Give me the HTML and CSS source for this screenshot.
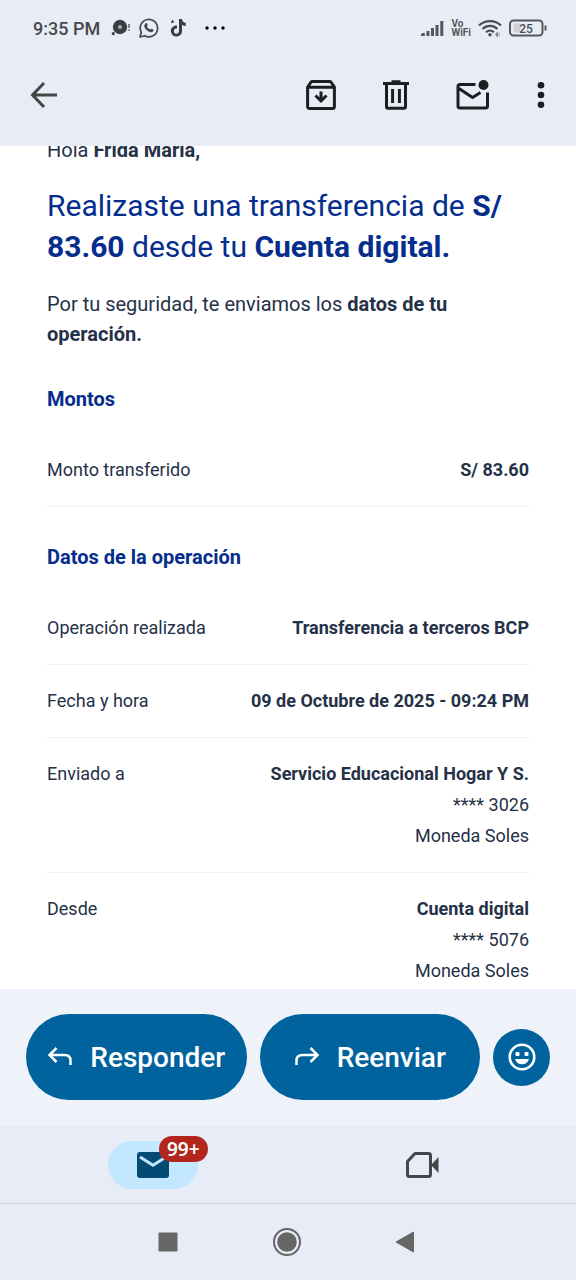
FILE: index.html
```html
<!DOCTYPE html>
<html lang="es">
<head>
<meta charset="utf-8">
<meta name="viewport" content="width=device-width, initial-scale=1">
<title>Correo</title>
<link rel="stylesheet" href="styles.css">
</head>
<body>
<header class="top">
  <div class="status">
    <div class="status-left">
      <span class="clock">9:35 PM</span>
      <svg class="ic-disc" width="20" height="18" viewBox="0 0 20 18"><circle cx="9" cy="8" r="7.2" fill="#3d3e42"/><circle cx="9" cy="8" r="1.7" fill="#e8ecf5"/><circle cx="9" cy="8" r=".7" fill="#3d3e42"/><circle cx="2.3" cy="14.6" r="1.6" fill="#3d3e42"/><path d="M18 5v4M18 10.5V12" stroke="#55565a" stroke-width="1.4"/></svg>
      <svg class="ic-wa" width="20" height="20" viewBox="0 0 20 20"><path d="M1 19l1.3-4.7A8.7 8.7 0 1 1 5.700 17.700z" fill="none" stroke="#47484c" stroke-width="1.700" stroke-linejoin="round"/><path d="M6.700 5.200c.6-.4 1.100-.2 1.300.3l.7 1.600c.1.400-.2.900-.7 1.400.7 1.400 1.800 2.500 3.300 3.100.5-.6.900-1 1.300-.8l1.600.8c.5.300.4.900.1 1.400-.9 1.400-2.600 1.500-4.200.7-2.200-.9-4-2.700-4.700-4.700-.4-1.500.2-3.100 1.300-3.800z" fill="#47484c"/></svg>
      <svg class="ic-tt" width="18" height="20" viewBox="0 0 18 20"><path d="M10 1h3c.2 2.200 1.600 3.700 3.800 3.900v3.100c-1.400 0-2.700-.4-3.800-1.200v6.200c0 3.200-2.500 5.500-5.600 5.500A5.600 5.600 0 0 1 1.800 13c0-3.200 2.700-5.800 6.200-5.500v3.200c-1.800-.4-3.100.8-3.100 2.300a2.500 2.500 0 0 0 5.100.2z" fill="#3b3c40"/><path d="M2 4.500l3-.8M3.500 2v3" stroke="#3b3c40" stroke-width="1.300"/></svg>
      <svg class="ic-dots" width="22" height="6" viewBox="0 0 22 6"><circle cx="3" cy="3" r="1.700"/><circle cx="11" cy="3" r="1.700"/><circle cx="19" cy="3" r="1.700"/></svg>
    </div>
    <div class="status-right">
      <svg width="23" height="17" viewBox="0 0 23 17"><path d="M2.300 13v3M7 11v5M11.500 8v8M16 5v11M20.800 1v15" stroke="#55575c" stroke-width="3"/><path d="M0 14h1v2H0z" fill="#55575c"/></svg>
      <span class="vowifi"><span>Vo</span><span>WiFi</span></span>
      <svg width="24" height="19" viewBox="0 0 24 19"><path d="M1 6.500C7 .6 17 .6 23 6.500M4.500 10c4.200-4.200 10.800-4.200 15 0M8 13.300c2.400-2.300 5.600-2.300 8 0" fill="none" stroke="#4b4d52" stroke-width="2.200"/><circle cx="12" cy="15.700" r="1.700" fill="#4b4d52"/><path d="M17.500 15.500l2-2.500v5zM21 13.500v4" fill="#777a80" stroke="#777a80" stroke-width=".7"/></svg>
      <svg class="battery" width="38" height="18" viewBox="0 0 38 18"><rect x="1" y="1.500" width="32.500" height="15" rx="3.500" fill="none" stroke="#55575c" stroke-width="2"/><rect x="4.500" y="4.500" width="7" height="9" rx="1" fill="#cfd2d9"/><path d="M36.500 6.500v5" stroke="#55575c" stroke-width="2"/><text x="17" y="13.500" text-anchor="middle" class="bat-text">25</text></svg>
    </div>
  </div>
  <div class="toolbar">
    <button class="icon-btn" aria-label="Atrás"><svg width="28" height="28" viewBox="0 0 28 28"><path d="M27 14H3M14 2L2.500 14 14 26" fill="none" stroke="#444544" stroke-width="3"/></svg></button>
    <div class="tools">
      <button class="icon-btn" aria-label="Archivar"><svg width="30" height="30" viewBox="0 0 30 30"><path d="M1.600 7L5 2.200Q5.500 1.600 6.200 1.600H23.800Q24.500 1.600 25 2.200L28.400 7V26.400Q28.400 28.400 26.400 28.400H3.600Q1.600 28.400 1.600 26.400zM2 7.300H28" fill="none" stroke="#1d1e21" stroke-width="3" stroke-linejoin="round"/><path d="M15 11.500V21M9.500 15.500L15 21l5.500-5.500" fill="none" stroke="#1d1e21" stroke-width="3"/></svg></button>
      <button class="icon-btn" aria-label="Eliminar"><svg width="26" height="30" viewBox="0 0 26 30"><path d="M0 3.500H26M8.500 1.800H17.500" stroke="#1d1e21" stroke-width="3"/><path d="M3.500 4V26.500Q3.500 28.300 5.300 28.300H20.700Q22.500 28.300 22.500 26.500V4M9.600 9V23M16.400 9V23" fill="none" stroke="#1d1e21" stroke-width="3"/></svg></button>
      <button class="icon-btn" aria-label="Marcar como no leído"><svg width="34" height="30" viewBox="0 0 34 30"><path d="M19.500 4.500H4Q2 4.500 2 6.500V26Q2 28 4 28H29.500Q31.500 28 31.500 26V12.500M3 8.500L16.500 17.500 24.500 12.500" fill="none" stroke="#1d1e21" stroke-width="3"/><circle cx="27.500" cy="5" r="5" fill="#1d1e21"/></svg></button>
      <button class="icon-btn" aria-label="Más opciones"><svg width="8" height="28" viewBox="0 0 8 28"><g fill="#1d1e21"><circle cx="4" cy="4.300" r="3.300"/><circle cx="4" cy="14" r="3.300"/><circle cx="4" cy="23.700" r="3.300"/></g></svg></button>
    </div>
  </div>
</header>

<main class="message">
  <article class="mail">
    <p class="hello">Hola <b>Frida Maria,</b></p>
    <h1>Realizaste una transferencia de <b>S/ 83.60</b> desde tu <b>Cuenta digital.</b></h1>
    <p class="intro">Por tu seguridad, te enviamos los <b>datos de tu operación.</b></p>
    <h2>Montos</h2>
    <dl class="rows">
      <div class="row"><dt>Monto transferido</dt><dd><b>S/ 83.60</b></dd></div>
    </dl>
    <h2>Datos de la operación</h2>
    <dl class="rows">
      <div class="row"><dt>Operación realizada</dt><dd><b>Transferencia a terceros BCP</b></dd></div>
      <div class="row"><dt>Fecha y hora</dt><dd><b>09 de Octubre de 2025 - 09:24 PM</b></dd></div>
      <div class="row"><dt>Enviado a</dt><dd><b>Servicio Educacional Hogar Y S.</b><span>**** 3026</span><span>Moneda Soles</span></dd></div>
      <div class="row"><dt>Desde</dt><dd><b>Cuenta digital</b><span>**** 5076</span><span>Moneda Soles</span></dd></div>
    </dl>
  </article>
</main>

<section class="actions">
  <button class="pill"><svg width="26" height="22" viewBox="0 0 26 22"><path d="M9.500 2L2.500 9l7 7M3 9H17.500Q23.500 9 23.500 14.500V19" fill="none" stroke="#fff" stroke-width="2.500"/></svg>Responder</button>
  <button class="pill"><svg width="26" height="22" viewBox="0 0 26 22"><path d="M16.500 2l7 7-7 7M23 9H8.500Q2.500 9 2.500 14.500V19" fill="none" stroke="#fff" stroke-width="2.500"/></svg>Reenviar</button>
  <button class="emoji" aria-label="Reaccionar"><svg width="28" height="28" viewBox="0 0 28 28"><circle cx="14" cy="14" r="12.300" fill="none" stroke="#fff" stroke-width="2.600"/><rect x="7.500" y="9" width="4" height="4" rx="1" fill="#fff"/><rect x="16.500" y="9" width="4" height="4" rx="1" fill="#fff"/><path d="M7 16H21C20 19.400 17.400 21.300 14 21.300S8 19.400 7 16z" fill="#fff"/></svg></button>
</section>

<nav class="tabs">
  <button class="tab" aria-label="Correo"><span class="tab-on"><svg width="32" height="26" viewBox="0 0 32 26"><rect width="32" height="26" rx="3" fill="#034a75"/><path d="M3 5l13 8.300L29 5" fill="none" stroke="#c3e7ff" stroke-width="3"/></svg><span class="badge">99+</span></span></button>
  <button class="tab" aria-label="Reuniones"><svg width="34" height="26" viewBox="0 0 34 26"><path d="M9 1.500H22.500Q24.500 1.500 24.500 3.500V22.500Q24.500 24.500 22.500 24.500H3.500Q1.500 24.500 1.500 22.500V9.500z" fill="none" stroke="#444649" stroke-width="3" stroke-linejoin="round"/><path d="M25 13L32.500 5V21z" fill="#444649"/></svg></button>
</nav>

<footer class="system">
  <button class="icon-btn" aria-label="Recientes"><svg width="20" height="20" viewBox="0 0 20 20"><rect x=".5" y=".5" width="19" height="19" rx="1" fill="#666"/></svg></button>
  <button class="icon-btn" aria-label="Inicio"><svg width="30" height="30" viewBox="0 0 30 30"><circle cx="15" cy="15" r="13" fill="none" stroke="#666" stroke-width="2"/><circle cx="15" cy="15" r="9.800" fill="#666"/></svg></button>
  <button class="icon-btn" aria-label="Volver"><svg width="20" height="22" viewBox="0 0 20 22"><path d="M18.500 1V21L1 11z" fill="#666" stroke="#666" stroke-linejoin="round"/></svg></button>
</footer>
</body>
</html>
```
FILE: styles.css
```css
* { box-sizing: border-box; }
body {
  margin: 0;
  height: 100vh;
  display: flex;
  flex-direction: column;
  background: #fff;
  color: #253147;
  font-family: Roboto, "Liberation Sans", sans-serif;
}
button {
  border: 0;
  padding: 0;
  background: none;
  font: inherit;
  color: inherit;
}
svg { display: block; flex: none; }

.top { flex: none; background: #e8ecf5; }
.status {
  height: 56px;
  padding: 0 29px 0 33px;
  display: flex;
  align-items: center;
  justify-content: space-between;
}
.status-left, .status-right { display: flex; align-items: center; }
.clock { font-size: 18px; font-weight: 500; color: #47484c; margin-right: 11px; }
.ic-wa { margin-left: 8px; }
.ic-tt { margin-left: 10px; }
.ic-dots { margin-left: 17px; }
.status-right { gap: 7px; }
.vowifi {
  display: flex;
  flex-direction: column;
  font-size: 10px;
  line-height: 9px;
  font-weight: 700;
  color: #55575c;
}
.bat-text { font-size: 12px; font-weight: 500; fill: #4b4d52; }
.toolbar {
  height: 90px;
  padding: 0 31px 12px 30px;
  display: flex;
  align-items: center;
  justify-content: space-between;
}
.tools { display: flex; align-items: center; gap: 47px; }

.message { flex: 1; min-height: 0; overflow: hidden; }
.mail { padding: 0 47px; margin-top: -11px; }
.mail p { margin: 0; font-size: 20px; line-height: 30px; }
.mail h1 {
  margin: 20px 0 0;
  font-size: 30px;
  line-height: 41px;
  font-weight: 400;
  color: #052d8c;
}
.mail .intro { margin-top: 22px; }
.mail h2 {
  margin: 35px 0;
  font-size: 20px;
  line-height: 30px;
  font-weight: 700;
  color: #052d8c;
}
.mail b { font-weight: 700; }
.rows { margin: 0; }
.row {
  display: flex;
  justify-content: space-between;
  padding: 21px 0;
  border-bottom: 1px solid #f0f1f3;
  font-size: 18px;
  line-height: 30px;
}
.row:first-child { padding-top: 6px; }
.row dd { margin: 0; display: flex; flex-direction: column; gap: 1px; text-align: right; }

.actions {
  flex: none;
  display: flex;
  align-items: center;
  gap: 13px;
  padding: 25px 26px 26px;
  background: #eff3f9;
}
.pill {
  flex: 1;
  height: 86px;
  border-radius: 43px;
  display: flex;
  align-items: center;
  justify-content: center;
  gap: 17px;
  background: #00639d;
  color: #fff;
  font-size: 28px;
  font-weight: 500;
}
.emoji {
  width: 57px;
  height: 57px;
  border-radius: 50%;
  display: grid;
  place-items: center;
  background: #00639d;
}

.tabs {
  flex: none;
  height: 78px;
  display: flex;
  background: #e8ecf6;
  border-bottom: 1px solid #cbd0db;
}
.tab { flex: 1; display: grid; place-items: center; }
.tab:first-child { padding-left: 18px; }
.tab:last-child { padding-right: 18px; }
.tab-on {
  position: relative;
  width: 90px;
  height: 48px;
  border-radius: 24px;
  display: grid;
  place-items: center;
  background: #c3e7ff;
}
.badge {
  position: absolute;
  top: -5px;
  left: 51px;
  height: 26px;
  padding: 0 8px;
  border-radius: 13px;
  background: #b3261e;
  color: #fff;
  font-family: "Noto Sans", sans-serif;
  font-size: 19px;
  line-height: 26px;
  font-weight: 600;
}
.system {
  flex: none;
  height: 76px;
  padding: 0 161px 0 158px;
  display: flex;
  align-items: center;
  justify-content: space-between;
  background: #e8ecf6;
}
```
